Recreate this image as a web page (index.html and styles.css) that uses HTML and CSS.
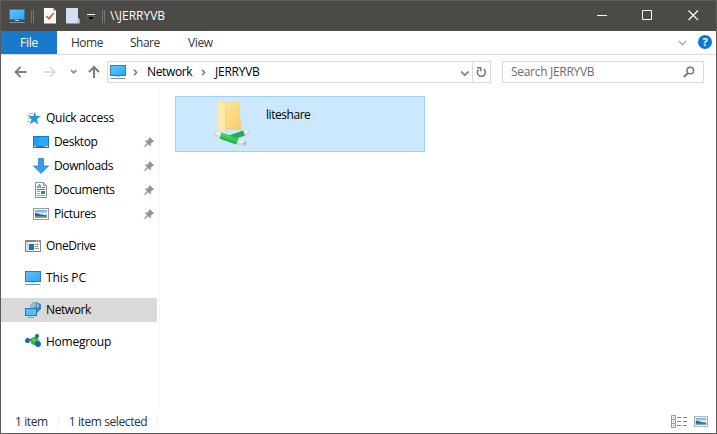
FILE: index.html
```html
<!DOCTYPE html>
<html lang="en">
<head>
<meta charset="utf-8">
<title>\\JERRYVB</title>
<link rel="stylesheet" href="styles.css">
</head>
<body>
<svg class="defs" width="0" height="0">
  <defs>
    <linearGradient id="blue" x1="0" y1="0" x2="1" y2="1"><stop offset="0" stop-color="#5cc4ff"/><stop offset=".5" stop-color="#45b5ff"/><stop offset="1" stop-color="#2ba5fb"/></linearGradient>
    <linearGradient id="fold" x1="0" y1="0" x2="1" y2="1"><stop offset="0" stop-color="#ffe59a"/><stop offset="1" stop-color="#f5cf6c"/></linearGradient>
    <linearGradient id="sky" x1="0" y1="0" x2="0" y2="1"><stop offset="0" stop-color="#5aa5ed"/><stop offset=".5" stop-color="#e0f3fb"/><stop offset=".7" stop-color="#a8d0e2"/><stop offset="1" stop-color="#5c9cbd"/></linearGradient>
    <symbol id="pc" viewBox="0 0 16 16"><path d="M0 1h16v11H0z" fill="#3c7a9c"/><path d="M1 2h14v9H1z" fill="url(#blue)"/><path d="M6 12h4v1H6z" fill="#b9ced9"/><path d="M1 14h14l1 1H0z" fill="#7893a2"/></symbol>
    <symbol id="pin" viewBox="0 0 12 12"><path d="M6.500.8 11.200 5.500 9.700 5.900 7.900 7.800 7.700 10.500 5.200 8.200 1 11.500.6 11.100 3.900 7 1.500 4.600 4.200 4.400 6.200 2.400z" fill="#8b98a3"/></symbol>
    <symbol id="pic" viewBox="0 0 16 12"><path d="M0 0h16v12H0z" fill="#9b9b9b"/><path d="M1 1h14v10H1z" fill="#fff"/><path d="M2 2h12v8H2z" fill="url(#sky)"/><path d="M2 5q3 0 6 1.500l6 1V8.500H2z" fill="#3c6657"/></symbol>
  </defs>
</svg>
<div class="window">
  <header class="titlebar">
    <svg class="t-pc" width="16" height="16"><use href="#pc"/></svg>
    <i class="grip"></i>
    <svg class="t-check" width="12" height="16"><path d="M0 0h9l3 3v12.500H0z" fill="#f9f9f8"/><path d="M9 0v3h3z" fill="#bbb"/><path d="m2.500 8 2.500 2.700L9.700 5" fill="none" stroke="#ea5722" stroke-width="1.700"/></svg>
    <svg class="t-folder" width="14" height="16"><path d="M0 0h12v10l1.500 1v4.500H0z" fill="#d2e0f3"/><path d="M11 10h2v5h-2z" fill="#b8cde8"/></svg>
    <svg class="t-drop" width="8" height="7"><path d="M0 0h8v1H0z" fill="#fff"/><path d="M0 2.500h8L4 6.500z" fill="#000" stroke="#999" stroke-width=".4"/></svg>
    <i class="grip"></i>
    <span class="title">\\JERRYVB</span>
    <svg class="controls" width="120" height="30" fill="none" stroke="#fff"><path d="M9 14.500h10M54.500 9.500h9v9h-9z"/><path d="m100.500 9.500 9.500 9.500m0-9.500-9.500 9.500" stroke-width="1.150"/></svg>
  </header>
  <nav class="ribbon">
    <span class="file">File</span>
    <span class="tab home">Home</span><span class="tab share">Share</span><span class="tab view">View</span>
    <svg class="collapse" width="9" height="6"><path d="m.7.8 3.800 3.800L8.300.8" fill="none" stroke="#9b9b9b" stroke-width="1.200"/></svg>
    <span class="help">?</span>
  </nav>
  <div class="address-row">
    <svg class="arrows" width="106" height="34" fill="none" stroke-width="1.800">
      <path d="M25.500 17H14.500m5-5-5 5 5 5" stroke="#7c7c7c"/>
      <path d="M43 17h11m-5-5 5 5-5 5" stroke="#dedede"/>
      <path d="m70 15.200 2.700 2.600 2.700-2.600" stroke="#8a8a8a" stroke-width="1.700"/>
      <path d="M93 23V12m-5 5 5-5 5 5" stroke="#7c7c7c" stroke-width="2"/>
    </svg>
    <div class="path">
      <svg class="p-pc" width="16" height="16"><use href="#pc"/></svg>
      <svg class="chev" width="5" height="7"><path d="m1 .7 2.600 2.800L1 6.300" fill="none" stroke="#777" stroke-width="1.500"/></svg>
      <span class="p-network">Network</span>
      <svg class="chev" width="5" height="7"><path d="m1 .7 2.600 2.800L1 6.300" fill="none" stroke="#777" stroke-width="1.500"/></svg>
      <span class="p-jerry">JERRYVB</span>
      <svg class="p-down" width="10" height="7"><path d="m1 1.500 3.800 3.600L8.600 1.500" fill="none" stroke="#8a8a8a" stroke-width="1.900"/></svg>
      <span class="refresh"><svg width="11" height="12" fill="none" stroke="#777" stroke-width="1.500"><path d="M7.800 3.200A4 4 0 1 1 2.500 3.500"/><path d="M1 1.700h3.700v3.500"/></svg></span>
    </div>
    <div class="search"><span>Search JERRYVB</span><svg width="12" height="12" fill="none" stroke="#777"><circle cx="7.300" cy="4.500" r="3.300" stroke-width="1.500"/><path d="M5 7 .8 11" stroke-width="1.900"/></svg></div>
  </div>
  <main class="body">
    <aside class="sidebar">
      <div class="row"><svg width="16" height="16"><path d="m10 1.500 1 4.500h5l-4 3 1.200 5.500-4-3-4.400 3L6.500 9.500 3.500 6h4.800z" fill="#2c95df"/><path d="M4 3.500h4M2 5.500h3M3 8.500h3M2 11.500h3" stroke="#8ac6f3"/></svg><span>Quick access</span></div>
      <div class="row sub"><svg width="16" height="16"><path d="M0 2h16v12H0z" fill="#1979bd"/><path d="M1 3h14v9H1z" fill="#1aa0fc"/><path d="M8 3h7v9H3z" fill="#35adff" opacity=".6"/><path d="M1 12.500h2m8 0h1m1 0h2" stroke="#d9f3ff"/></svg><span>Desktop</span><svg class="pin" width="12" height="12"><use href="#pin"/></svg></div>
      <div class="row sub"><svg width="16" height="16"><path d="M5.500.5h5V8h5L8 15.500.5 8h5z" fill="#3b9cec" stroke="#2e82c7" stroke-width=".8"/></svg><span>Downloads</span><svg class="pin" width="12" height="12"><use href="#pin"/></svg></div>
      <div class="row sub"><svg width="16" height="16"><path d="M2.500.5h8l3 3v12h-11z" fill="#fff" stroke="#8c8c8c"/><path d="M10.500.5v3h3" fill="#ddd" stroke="#8c8c8c"/><path d="m4.500 6 2-4 1.500 4M4.500 5h3M9 5.500h3" fill="none" stroke="#268dd4"/><path d="M4 7.500h8" stroke="#268dd4"/><path d="M4 9.500h3m-3 2h3m-3 2h8" stroke="#95a4ae"/><path d="M8 9h4v3H8z" fill="#2785bd"/></svg><span>Documents</span><svg class="pin" width="12" height="12"><use href="#pin"/></svg></div>
      <div class="row sub"><svg width="16" height="16"><use href="#pic" y="2" width="16" height="12"/></svg><span>Pictures</span><svg class="pin" width="12" height="12"><use href="#pin"/></svg></div>
      <div class="row group"><svg width="16" height="16"><path d="M0 2h16v12H0z" fill="#858585"/><path d="M1 4h14v9H1z" fill="#f6f6f6"/><path d="M1 4h3v9H1z" fill="#ddd"/><path d="M4 6h5v6H4z" fill="#0879d9"/><path d="M10 6.500h4m-4 2h3m-3 2h4" stroke="#949494"/><path d="M11 3h1m1 0h1" stroke="#fff"/></svg><span>OneDrive</span></div>
      <div class="row group"><svg width="16" height="16"><use href="#pc"/></svg><span class="n-pc">This PC</span></div>
      <div class="row group selected"><svg width="16" height="16"><path d="M5 5Q6 0 11 0l5 2v5l-5 5z" fill="#3989b9"/><path d="M5 5Q7 0 11 0v5L8 6H5z" fill="#8fbdd3"/><path d="m12 1 2 3-2 2z" fill="#b9dbe8"/><path d="M0 6h12v8H0z" fill="#287aa8"/><path d="M1 7h10v6H1z" fill="#55bdff"/><path d="M3 15.500h6" stroke="#82a1b2"/></svg><span>Network</span></div>
      <div class="row group"><svg width="16" height="16"><path d="m3 6.500 7 .5 2-5M10 7l3 3" stroke="#a7c9ce"/><circle cx="9.700" cy="7" r="4" fill="#35b04a"/><circle cx="9" cy="6" r="2" fill="#58c95f"/><circle cx="2.500" cy="6.500" r="2.500" fill="#1765b3"/><circle cx="12" cy="2" r="2" fill="#1765b3"/><circle cx="13" cy="10" r="2.900" fill="#1765b3"/></svg><span class="n-home">Homegroup</span></div>
    </aside>
    <section class="content">
      <div class="tile">
        <svg class="share-folder" width="38" height="48">
          <path d="M6 1h21v19l1.500 1v9H12L6 22z" fill="url(#fold)"/><path d="M5 1.500 12.500 6v26l-2 1L5 29z" fill="#ffe9ae"/><path d="M12.500 6v25" stroke="#eccf82" stroke-width=".7"/>
          <g fill="none"><path d="M3.500 34 10 36.500M28 35l6-2.500M24 42l7.500 1.500" stroke="#d3d9da" stroke-width="5.600" stroke-linecap="round"/>
          <path d="M3.500 33 9 35M28 34l6-2.500M25 41l6 1.200" stroke="#eef1f1" stroke-width="2.500" stroke-linecap="round"/>
          <path d="m17 38 14-5" stroke="#25a951" stroke-width="5.500"/><path d="m7.500 35.500 17 6" stroke="#36c65a" stroke-width="6.500"/><path d="m8 38 15 5.500" stroke="#24ad49" stroke-width="1.500"/><path d="m9 34.500 9 3" stroke="#59da76" stroke-width="1.300"/></g>
          <ellipse cx="31.500" cy="43.500" rx="1.500" ry="2" fill="#b4bfc3"/>
        </svg>
        <span class="n-lite">liteshare</span>
      </div>
    </section>
  </main>
  <footer class="status">
    <span>1 item</span><i></i><span>1 item selected</span><i class="second"></i>
    <svg width="37" height="14"><path d="M.5.500h4v12h-4zM.5 4.500h4m-4 4h4" fill="none" stroke="#999"/><path d="M2 2h1v1H2z" fill="#398b86"/><path d="M2 6h1v1H2z" fill="#4397dc"/><path d="M2 10h1v1H2z" fill="#dd4a22"/><path d="M6 2.500h4m2 0h4m-10 4h4m2 0h4m-10 4h4m2 0h4" stroke="#858585"/><use href="#pic" x="23" y="1" width="14" height="11"/></svg>
  </footer>
</div>
</body>
</html>
```
FILE: styles.css
```css
* { box-sizing: border-box; }
body { margin: 0; font: 12px/16px "Open Sans", "Noto Sans", sans-serif; color: #000; letter-spacing: -.25px; }
svg { display: block; flex: none; overflow: visible; }
.defs { position: absolute; }
.window { width: 717px; height: 434px; border: 1px solid #5b5b59; background: #fff; display: flex; flex-direction: column; overflow: hidden; }
span { white-space: nowrap; }

.titlebar { height: 30px; flex: none; background: #4b4a47; display: flex; align-items: center; color: #fff; }
.t-pc { margin-left: 8px; }
.grip { width: 3px; height: 13px; border: 1px solid #777673; border-width: 0 1px; margin-left: 6px; }
.t-check { margin-left: 10px; }
.t-folder { margin-left: 10px; }
.t-drop { margin: 3px 7px 0 7px; }
.titlebar .t-drop + .grip { margin-left: 0; }
.title { margin-left: 5px; letter-spacing: 0; }
.controls { margin-left: auto; margin-right: 8px; }

.ribbon { height: 24px; flex: none; border-bottom: 1px solid #dadbdc; display: flex; color: #333; line-height: 24px; }
.file { width: 56px; background: #1979ca; color: #fff; text-align: center; }
.home { margin-left: 14px; width: 59px; letter-spacing: -.5px; }
.share { width: 58px; letter-spacing: -.5px; }
.view { letter-spacing: -.4px; }
.collapse { margin: 9px 11px 0 auto; }
.help { width: 14px; height: 14px; margin: 4px 4px 0 0; border-radius: 50%; background: #0b78d4; color: #fff; font: 700 11px/14px "Open Sans", sans-serif; text-align: center; }

.address-row { height: 35px; flex: none; display: flex; }
.path { width: 384px; height: 22px; margin-top: 6px; border: 1px solid #d9d9d9; display: flex; align-items: center; }
.p-pc { margin-left: 2px; }
.chev { margin-left: 7px; }
.p-network { margin-left: 9px; width: 48px; letter-spacing: -.35px; }
.p-network + .chev { margin-left: 6px; }
.p-jerry { margin-left: 9px; }
.p-down { margin: 2px 2px 0 auto; }
.refresh { width: 18px; height: 20px; border-left: 1px solid #d9d9d9; display: flex; align-items: center; justify-content: center; }
.search { width: 202px; height: 22px; margin: 6px 0 0 11px; border: 1px solid #d9d9d9; color: #6d6d6d; display: flex; align-items: center; padding: 0 8px; letter-spacing: -.3px; }
.search svg { margin-left: auto; }

.body { flex: 1; display: flex; min-height: 0; }
.sidebar { width: 159px; padding-top: 16px; border-right: 1px solid #f5f5f5; letter-spacing: -.4px; }
.row { height: 24px; width: 156px; padding-left: 24px; display: flex; align-items: center; gap: 5px; }
.row:first-child { letter-spacing: -.28px; }
.row.sub { padding-left: 32px; }
.row.group { margin-top: 8px; }
.row.selected { background: #d9d9d9; }
.n-pc { letter-spacing: -.1px; }
.n-home { letter-spacing: -.25px; }
.pin { margin: 0 2px 0 auto; }
.content { padding: 6px 0 0 15px; }
.tile { width: 250px; height: 56px; border: 1px solid #99d1ff; background: #cce8ff; display: flex; }
.share-folder { margin: 3px 0 0 37px; }
.n-lite { margin: 10px 0 0 15px; letter-spacing: -.45px; }

.status { height: 23px; flex: none; color: #22304f; display: flex; align-items: center; padding-left: 14px; letter-spacing: -.4px; }
.status i { width: 1px; height: 11px; background: #eee; margin: 0 10px; }
.status .second { margin-right: 0; }
.status svg { margin: 0 8px 0 auto; }
```
